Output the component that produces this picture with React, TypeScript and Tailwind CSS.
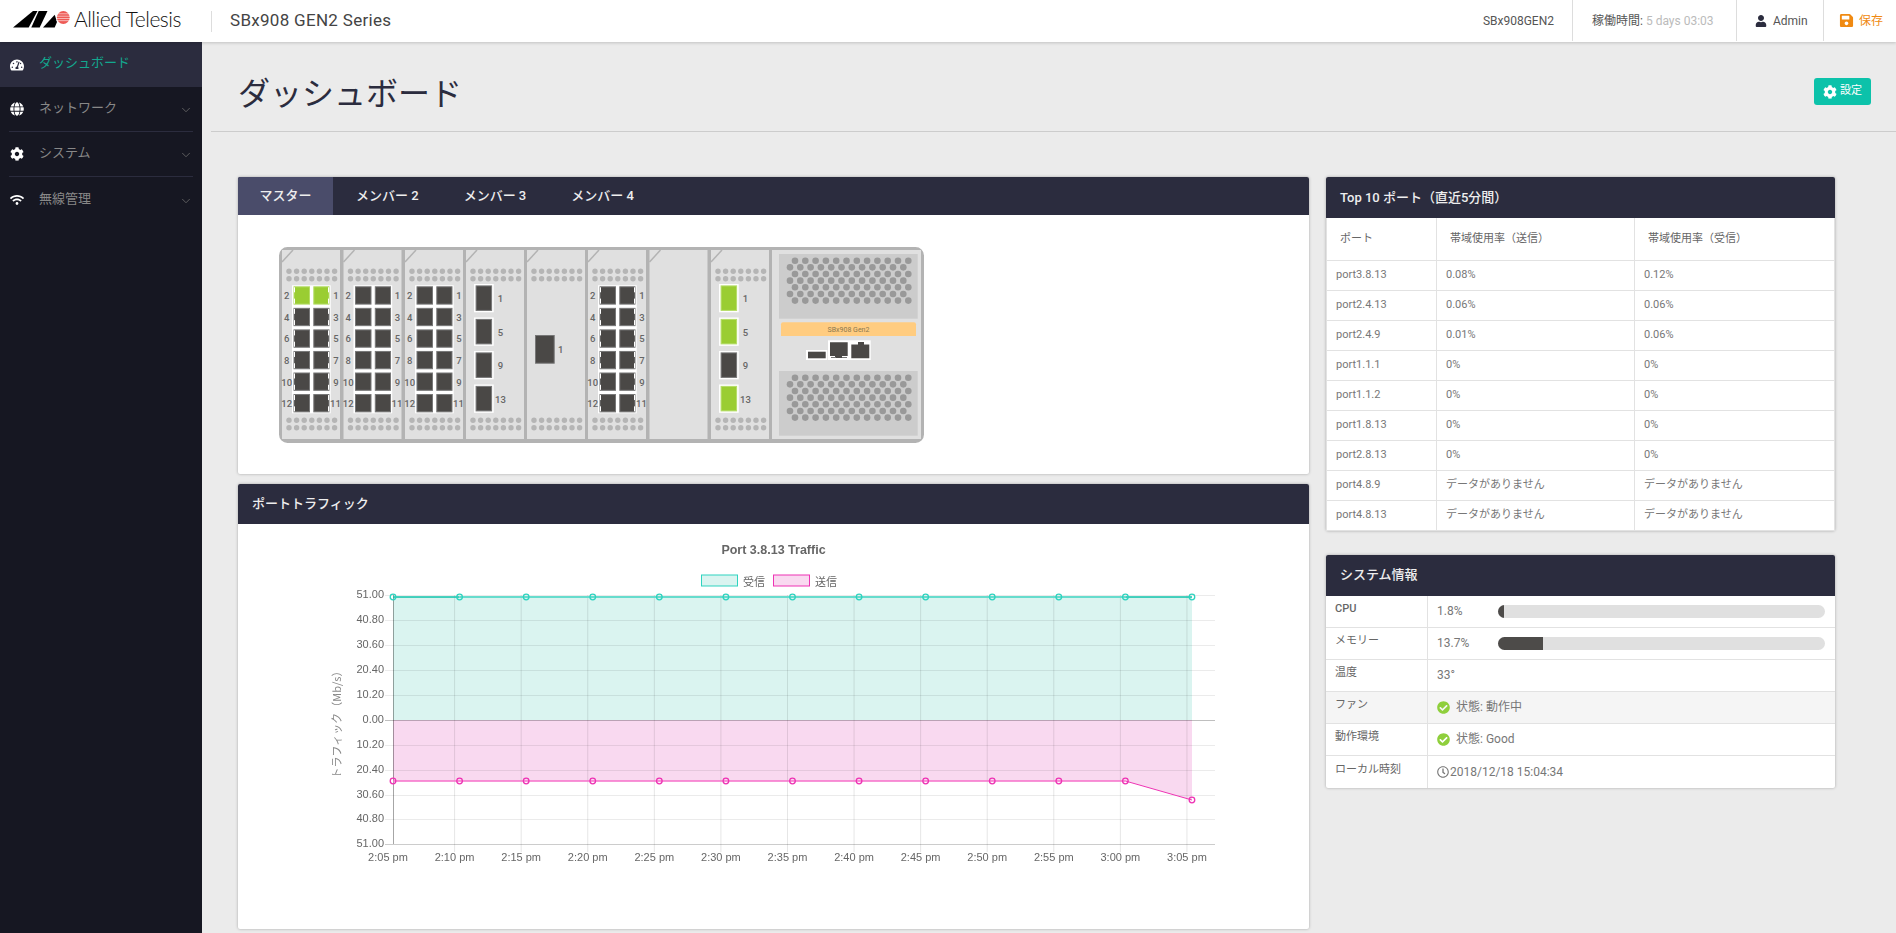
import { ChevronDown } from "lucide-react";
import {
  FaTachometerAlt,
  FaGlobe,
  FaCog,
  FaWifi,
  FaUser,
  FaSave,
  FaCheckCircle,
  FaRegClock,
} from "react-icons/fa";

const DARK = "#4a4846";
const GREEN = "#9acd32";

function Logo() {
  return (
    <svg width="190" height="42" viewBox="0 0 190 42" className="shrink-0">
      <polygon points="13,27.5 33,11 37.5,11 28.7,27.5" fill="#000" />
      <polygon points="38.7,11 47.5,11 39.7,27.5 31.3,27.5" fill="#000" />
      <polygon points="43,27.5 54.7,14.7 57,22 54.7,27.5" fill="#000" />
      <circle cx="63.3" cy="17.5" r="6.4" fill="#ee5a55" />
      {[13.5, 15.8, 18.1, 20.4].map((y) => (
        <rect key={y} x="56" y={y} width="15" height="0.7" fill="#fff" opacity="0.8" />
      ))}
      <text x="74" y="27" fontFamily="Lato, sans-serif" fontWeight="300" fontSize="21" letterSpacing="-0.5" fill="#111">
        Allied Telesis
      </text>
    </svg>
  );
}

function NavItem({ icon, label, active, last }: { icon: React.ReactNode; label: string; active?: boolean; last?: boolean }) {
  return (
    <div className={active ? "bg-[#2b2c3e] h-[45px]" : "h-[45px] px-[9px]"}>
      <div
        className={`flex items-center h-full ${active ? "px-[9px]" : ""} ${!active && !last ? "border-b border-[#2b2c3e]" : ""}`}
      >
        <span className="w-[16px] flex justify-center text-white text-[14px]">{icon}</span>
        <span className={`ml-[14px] text-[13px] flex-1 ${active ? "text-[#13a88f] -mt-[3px]" : "text-[#888888] -mt-[2px] -ml-[-13px]"}`}>
          {label}
        </span>
        {!active && <ChevronDown size={14} strokeWidth={1.5} className="text-[#666] mr-[0px] mt-[2px]" />}
      </div>
    </div>
  );
}

function Sidebar() {
  return (
    <aside className="w-[202px] shrink-0 bg-[#161722]">
      <NavItem icon={<FaTachometerAlt />} label="ダッシュボード" active />
      <NavItem icon={<FaGlobe />} label="ネットワーク" />
      <NavItem icon={<FaCog />} label="システム" />
      <NavItem icon={<FaWifi />} label="無線管理" last />
    </aside>
  );
}

function Header() {
  return (
    <header className="relative z-10 flex items-center h-[42px] bg-white shadow-[0_1px_3px_rgba(0,0,0,0.18)] shrink-0">
      <Logo />
      <div className="ml-[21px] h-[21px] border-l border-[#dddddd]" />
      <div className="ml-[18px] text-[17px] text-[#444444] tracking-[0.3px]">SBx908 GEN2 Series</div>
      <div className="ml-auto flex h-[41px] self-start text-[12px] text-[#555555]">
        <div className="flex items-center pr-[18px]">SBx908GEN2</div>
        <div className="flex items-center w-[164px] pl-[19px] border-l border-[#dddddd]">
          稼働時間:<span className="ml-[3px] text-[#bbbbbb]">5 days 03:03</span>
        </div>
        <div className="flex items-center w-[87px] pl-[18px] border-l border-[#dddddd]">
          <FaUser className="text-[#2b2c3e] text-[12px]" />
          <span className="ml-[6px]">Admin</span>
        </div>
        <div className="flex items-center w-[73px] pl-[15px] border-l border-[#dddddd] text-[#f08a12]">
          <FaSave className="text-[15px]" />
          <span className="ml-[5px]">保存</span>
        </div>
      </div>
    </header>
  );
}

function DotRows({ x, y }: { x: number; y: number }) {
  return (
    <>
      {[0, 1].map((r) =>
        [0, 1, 2, 3, 4, 5, 6].map((c) => (
          <circle key={`${r}-${c}`} cx={x + 7 + c * 7.6} cy={y + r * 7.4} r="2.7" fill="#b5b5b5" />
        )),
      )}
    </>
  );
}

function Label({ x, y, children }: { x: number; y: number; children: React.ReactNode }) {
  return (
    <text x={x} y={y} textAnchor="middle" dominantBaseline="central" fontFamily="Roboto, sans-serif" fontWeight="500" fontSize="9.5" fill="#666">
      {children}
    </text>
  );
}

function Port({ x, y, w, h, fill, ticks }: { x: number; y: number; w: number; h: number; fill: string; ticks?: "l" | "r" }) {
  const tx = ticks === "l" ? x + 0.5 : x + w - 1.5;
  return (
    <g>
      <rect x={x + 0.5} y={y + 0.5} width={w - 1} height={h - 1} fill={fill} stroke={fill === GREEN ? "#b5dd66" : "#777"} strokeWidth="1" />
      {ticks && (
        <>
          <rect x={tx} y={y + 1} width="1" height="5" fill="#fff" />
          <rect x={tx} y={y + h - 6} width="1" height="5" fill="#fff" />
        </>
      )}
    </g>
  );
}

function CopperModule({ x, ticks, litRows = [] }: { x: number; ticks?: boolean; litRows?: number[] }) {
  return (
    <g>
      <DotRows x={x} y={271.3} />
      <DotRows x={x} y={420.3} />
      <rect x={x + 10} y={285.3} width={38.7} height={128} fill="#fff" />
      {[0, 1, 2, 3, 4, 5].map((r) => {
        const y = 286.3 + r * 21.55;
        const fill = litRows.includes(r) ? GREEN : DARK;
        return (
          <g key={r}>
            <Port x={x + 11.5} y={y} w={16.5} h={18.3} fill={fill} ticks={ticks ? "l" : undefined} />
            <Port x={x + 31.3} y={y} w={16.2} h={18.3} fill={fill} ticks={ticks ? "r" : undefined} />
            <Label x={x + 4.7} y={y + 9.5}>{(r + 1) * 2}</Label>
            <Label x={r === 5 ? x + 53.5 : x + 54} y={y + 9.5}>{r * 2 + 1}</Label>
          </g>
        );
      })}
    </g>
  );
}

function SfpModule({ x, lit = [] }: { x: number; lit?: number[] }) {
  return (
    <g>
      <DotRows x={x} y={271.3} />
      <DotRows x={x} y={420.3} />
      {[1, 5, 9, 13].map((n, i) => {
        const y = 284 + i * 33.5;
        return (
          <g key={n}>
            <rect x={x + 8} y={y} width={19.7} height={28.3} fill="#fff" />
            <Port x={x + 9.6} y={y + 1.4} w={16.5} h={25.5} fill={lit.includes(n) ? GREEN : DARK} />
            <Label x={x + 34.5} y={y + 14.5}>{n}</Label>
          </g>
        );
      })}
    </g>
  );
}

function Vent({ y, h }: { y: number; h: number }) {
  const top = y + 6.7;
  return (
    <g>
      <rect x="779" y={y} width="138.7" height={h} fill="#cccccc" />
      {[0, 1, 2, 3, 4, 5, 6].map((r) =>
        Array.from({ length: 12 }, (_, c) => (
          <circle key={`${r}-${c}`} cx={(r % 2 === 0 ? 795 : 790) + c * 10.3} cy={top + r * 6.65} r="3.3" fill="#999999" />
        )),
      )}
    </g>
  );
}

const MODULE_X = [282, 343.5, 405, 466, 527, 588, 649.5, 711];

function Chassis() {
  return (
    <svg width="1071" height="259" viewBox="238 215 1071 259" className="block">
      <rect x="280.5" y="248.5" width="642" height="193" rx="7" fill="#b3b3b3" stroke="#b3b3b3" strokeWidth="3" />
      {MODULE_X.map((x) => (
        <g key={x}>
          <path d={`M${x} 250 H${x + 58} V439 H${x} Z`} fill="#e0e0e0" />
          <path d={`M${x} 262 L${x + 11} 250`} stroke="#b3b3b3" strokeWidth="1.5" fill="none" />
        </g>
      ))}
      <rect x="772" y="250" width="149" height="189" fill="#e0e0e0" />
      <CopperModule x={282} ticks litRows={[0]} />
      <CopperModule x={343.5} />
      <CopperModule x={405} />
      <SfpModule x={466} />
      <DotRows x={527} y={271.3} />
      <DotRows x={527} y={420.3} />
      <Port x={535} y={335} w={19.7} h={28.7} fill={DARK} />
      <Label x={560.7} y={349.5}>1</Label>
      <CopperModule x={588} ticks />
      <SfpModule x={711} lit={[1, 5, 13]} />

      <Vent y={254} h={64.7} />
      <Vent y={371} h={64.7} />
      <path d="M781 336 V324.3 a2 2 0 0 1 2 -2 H914 a2 2 0 0 1 2 2 V336 Z" fill="#ffcc80" />
      <text x="848.5" y="329.5" textAnchor="middle" dominantBaseline="central" fontFamily="Roboto, sans-serif" fontSize="7" fill="#8a7850">
        SBx908 Gen2
      </text>
      <rect x="806" y="350" width="21.3" height="10" fill="#fff" />
      <rect x="808" y="351.7" width="17.7" height="6.6" fill={DARK} />
      <rect x="828" y="340.3" width="42.7" height="19.7" fill="#fff" />
      <path d="M830 342.3 H847.7 V356 H842 V358 H835 V356 H830 Z" fill={DARK} />
      <rect x="831" y="357" width="5" height="1" fill="#777" />
      <rect x="842" y="357" width="5" height="1" fill="#777" />
      <path d="M851.3 344.5 H858 V342 H864 V344.5 H869.3 V358.3 H851.3 Z" fill={DARK} />
    </svg>
  );
}

const TIMES = ["2:05", "2:10", "2:15", "2:20", "2:25", "2:30", "2:35", "2:40", "2:45", "2:50", "2:55", "3:00", "3:05"];
const Y_TICKS = [
  [595, "51.00"],
  [620, "40.80"],
  [645, "30.60"],
  [670, "20.40"],
  [695, "10.20"],
  [720, "0.00"],
  [745, "10.20"],
  [770, "20.40"],
  [795, "30.60"],
  [819, "40.80"],
  [844, "51.00"],
] as const;

function px(i: number) {
  return 393 + i * 66.58;
}

function TrafficChart() {
  const axisText = { fontFamily: "'Liberation Sans', sans-serif", fontSize: 11, fill: "#666666" };
  return (
    <svg width="1071" height="405" viewBox="238 524 1071 405" className="block blur-[0.3px]">
      <text x="773.5" y="550" textAnchor="middle" dominantBaseline="central" fontFamily="'Liberation Sans', sans-serif" fontWeight="700" fontSize="12.5" fill="#666666">
        Port 3.8.13 Traffic
      </text>
      <rect x="701.5" y="575" width="36" height="11" fill="#daf4f0" stroke="#2ed3bf" strokeWidth="1" />
      <text x="743" y="580.5" dominantBaseline="central" fontFamily="'Noto Sans CJK JP', sans-serif" fontSize="11" fill="#666666">受信</text>
      <rect x="773.5" y="575" width="36" height="11" fill="#f9d9f0" stroke="#ee33b4" strokeWidth="1" />
      <text x="815" y="580.5" dominantBaseline="central" fontFamily="'Noto Sans CJK JP', sans-serif" fontSize="11" fill="#666666">送信</text>

      <text transform="translate(336 722) rotate(-90)" textAnchor="middle" dominantBaseline="central" fontFamily="'Noto Sans CJK JP', sans-serif" fontSize="11" fill="#888888">
        トラフィック（Mb/s）
      </text>

      <polygon points="393,597 1192,597 1192,720 393,720" fill="#daf4f0" />
      <polygon points="393,720 1192,720 1192,800 1126,781 393,781" fill="#f9d9f0" />

      {Y_TICKS.map(([y, label]) => (
        <g key={`${y}${label}`}>
          <line x1="385" x2="1215" y1={y + 0.5} y2={y + 0.5} stroke="#000" strokeOpacity={y === 720 ? 0.25 : y === 844 ? 0.2 : 0.08} />
          <text x="384" y={y - 1} textAnchor="end" dominantBaseline="central" {...axisText}>{label}</text>
        </g>
      ))}
      <line x1="393.5" x2="393.5" y1="595" y2="844" stroke="#000" strokeOpacity="0.35" />
      {TIMES.map((t, i) => {
        const x = 388 + i * 66.58;
        return (
          <g key={t}>
            {i > 0 && <line x1={x} x2={x} y1="595" y2="852" stroke="#000" strokeOpacity="0.1" />}
            <text x={x} y="857" textAnchor="middle" dominantBaseline="central" {...axisText}>{t} pm</text>
          </g>
        );
      })}

      <line x1={px(0)} x2={px(1)} y1="597" y2="597" stroke="#0cc2aa" strokeWidth="1.5" />
      <line x1={px(1)} x2={px(11)} y1="597" y2="597" stroke="#66dccd" strokeWidth="2" />
      <line x1={px(11)} x2={px(12)} y1="597" y2="597" stroke="#0cc2aa" strokeWidth="1.5" />
      <line x1={px(0)} x2={px(11)} y1="781" y2="781" stroke="#f66fca" strokeWidth="1.5" />
      <line x1={px(11)} x2={px(12)} y1="781" y2="800" stroke="#ee33b4" strokeWidth="1" />
      {TIMES.map((t, i) => (
        <g key={t} fill="none" strokeWidth="1.3">
          <circle cx={px(i)} cy="597" r="2.8" stroke="#2ed3bf" />
          <circle cx={px(i)} cy={i === 12 ? 800 : 781} r="2.8" stroke="#ee33b4" />
        </g>
      ))}
    </svg>
  );
}

const TOP_PORTS = [
  ["port3.8.13", "0.08%", "0.12%"],
  ["port2.4.13", "0.06%", "0.06%"],
  ["port2.4.9", "0.01%", "0.06%"],
  ["port1.1.1", "0%", "0%"],
  ["port1.1.2", "0%", "0%"],
  ["port1.8.13", "0%", "0%"],
  ["port2.8.13", "0%", "0%"],
  ["port4.8.9", "データがありません", "データがありません"],
  ["port4.8.13", "データがありません", "データがありません"],
];

function TopPorts() {
  return (
    <table className="w-[508px] table-fixed border-collapse text-[11px] text-[#777777]">
      <colgroup>
        <col className="w-[110px]" />
        <col className="w-[198px]" />
        <col className="w-[200px]" />
      </colgroup>
      <thead>
        <tr className="h-[42px] border-b border-[#e2e2e2]">
          <th className="font-normal text-left pl-[13px] border-x border-[#e2e2e2] text-[#666666]">ポート</th>
          <th className="font-normal text-left pl-[13px] border-x border-[#e2e2e2] text-[#666666]">帯域使用率（送信）</th>
          <th className="font-normal text-left pl-[13px] border-x border-[#e2e2e2] text-[#666666]">帯域使用率（受信）</th>
        </tr>
      </thead>
      <tbody>
        {TOP_PORTS.map((row) => (
          <tr key={row[0]} className="h-[30px] border-b border-[#e2e2e2]">
            {row.map((cell, i) => (
              <td key={i} className="pl-[9px] border-x border-[#e2e2e2]">{cell}</td>
            ))}
          </tr>
        ))}
      </tbody>
    </table>
  );
}

function Bar({ value }: { value: number }) {
  return (
    <div className="flex items-center w-full">
      <span className="w-[61px] shrink-0">{value}%</span>
      <div className="w-[327px] h-[13px] rounded-full bg-[#e0e0e0] overflow-hidden">
        <div className="h-full bg-[#4d4b49]" style={{ width: `${value}%` }} />
      </div>
    </div>
  );
}

function Ok({ text }: { text: string }) {
  return (
    <span className="flex items-center">
      <FaCheckCircle className="text-[13px] text-[#8fcf3c]" />
      <span className="ml-[6px]">{text}</span>
    </span>
  );
}

function InfoRow({ label, children, shaded, medium }: { label: string; children: React.ReactNode; shaded?: boolean; medium?: boolean }) {
  return (
    <div className={`flex h-[32px] border-b border-[#e2e2e2] last:border-b-0 ${shaded ? "bg-[#f5f5f5]" : ""}`}>
      <div className={`w-[102px] shrink-0 pl-[9px] pb-[3px] flex items-center border-r border-[#e2e2e2] text-[11px] text-[#666666] ${medium ? "font-medium" : ""}`}>
        {label}
      </div>
      <div className="flex-1 pl-[9px] flex items-center text-[12px] text-[#777777]">{children}</div>
    </div>
  );
}

function CardHeader({ children }: { children: React.ReactNode }) {
  return (
    <div className="h-[41px] flex items-center pl-[14px] bg-[#2b2c3e] text-[13px] font-medium text-[#eeeeee] rounded-t-[2px]">
      {children}
    </div>
  );
}

const cardClass = "bg-white rounded-[2px] shadow-[0_0_3px_rgba(0,0,0,0.3)]";

export default function App() {
  return (
    <div className="h-[933px] w-[1896px] flex flex-col overflow-hidden bg-[#ebebeb] font-['Roboto','Noto_Sans_CJK_JP',sans-serif]">
      <Header />
      <div className="flex flex-1 min-h-0">
        <Sidebar />
        <main className="flex-1 min-w-0">
          <div className="ml-[9px] h-[90px] flex items-start justify-between border-b border-[#cccccc]">
            <h1 className="ml-[27px] mt-[28px] text-[32px] leading-[48px] font-normal text-[#2b2c3e]">ダッシュボード</h1>
            <button className="mt-[36px] mr-[25px] w-[57px] h-[27px] flex items-center justify-center rounded-[3px] bg-[#0cc2aa] text-white text-[11px]">
              <FaCog className="text-[14px] mr-[3px]" />
              設定
            </button>
          </div>
          <div className="flex gap-[17px] pl-[36px] pt-[45px]">
            <div className="w-[1071px] flex flex-col gap-[10px]">
              <section className={`${cardClass} h-[297px] overflow-hidden`}>
                <div className="h-[38px] flex bg-[#2b2c3e] text-[13px] font-medium text-[#eeeeee]">
                  <div className="w-[95px] flex items-center justify-center bg-[#4a4c6a]">マスター</div>
                  <div className="pl-[23px] pr-[22px] flex items-center">メンバー 2</div>
                  <div className="pl-[23px] pr-[22px] flex items-center">メンバー 3</div>
                  <div className="pl-[23px] pr-[22px] flex items-center">メンバー 4</div>
                </div>
                <Chassis />
              </section>
              <section className={`${cardClass} h-[445px] overflow-hidden`}>
                <div className="h-[40px] flex items-center pl-[14px] bg-[#2b2c3e] text-[13px] font-medium text-[#eeeeee]">ポートトラフィック</div>
                <TrafficChart />
              </section>
            </div>
            <div className="w-[509px] flex flex-col gap-[24px]">
              <section className={cardClass}>
                <CardHeader>Top 10 ポート（直近5分間）</CardHeader>
                <TopPorts />
              </section>
              <section className={cardClass}>
                <CardHeader>システム情報</CardHeader>
                <InfoRow label="CPU" medium><Bar value={1.8} /></InfoRow>
                <InfoRow label="メモリー"><Bar value={13.7} /></InfoRow>
                <InfoRow label="温度">33°</InfoRow>
                <InfoRow label="ファン" shaded><Ok text="状態: 動作中" /></InfoRow>
                <InfoRow label="動作環境"><Ok text="状態: Good" /></InfoRow>
                <InfoRow label="ローカル時刻">
                  <FaRegClock className="text-[12px] mr-[1px]" />
                  2018/12/18 15:04:34
                </InfoRow>
              </section>
            </div>
          </div>
        </main>
      </div>
    </div>
  );
}
